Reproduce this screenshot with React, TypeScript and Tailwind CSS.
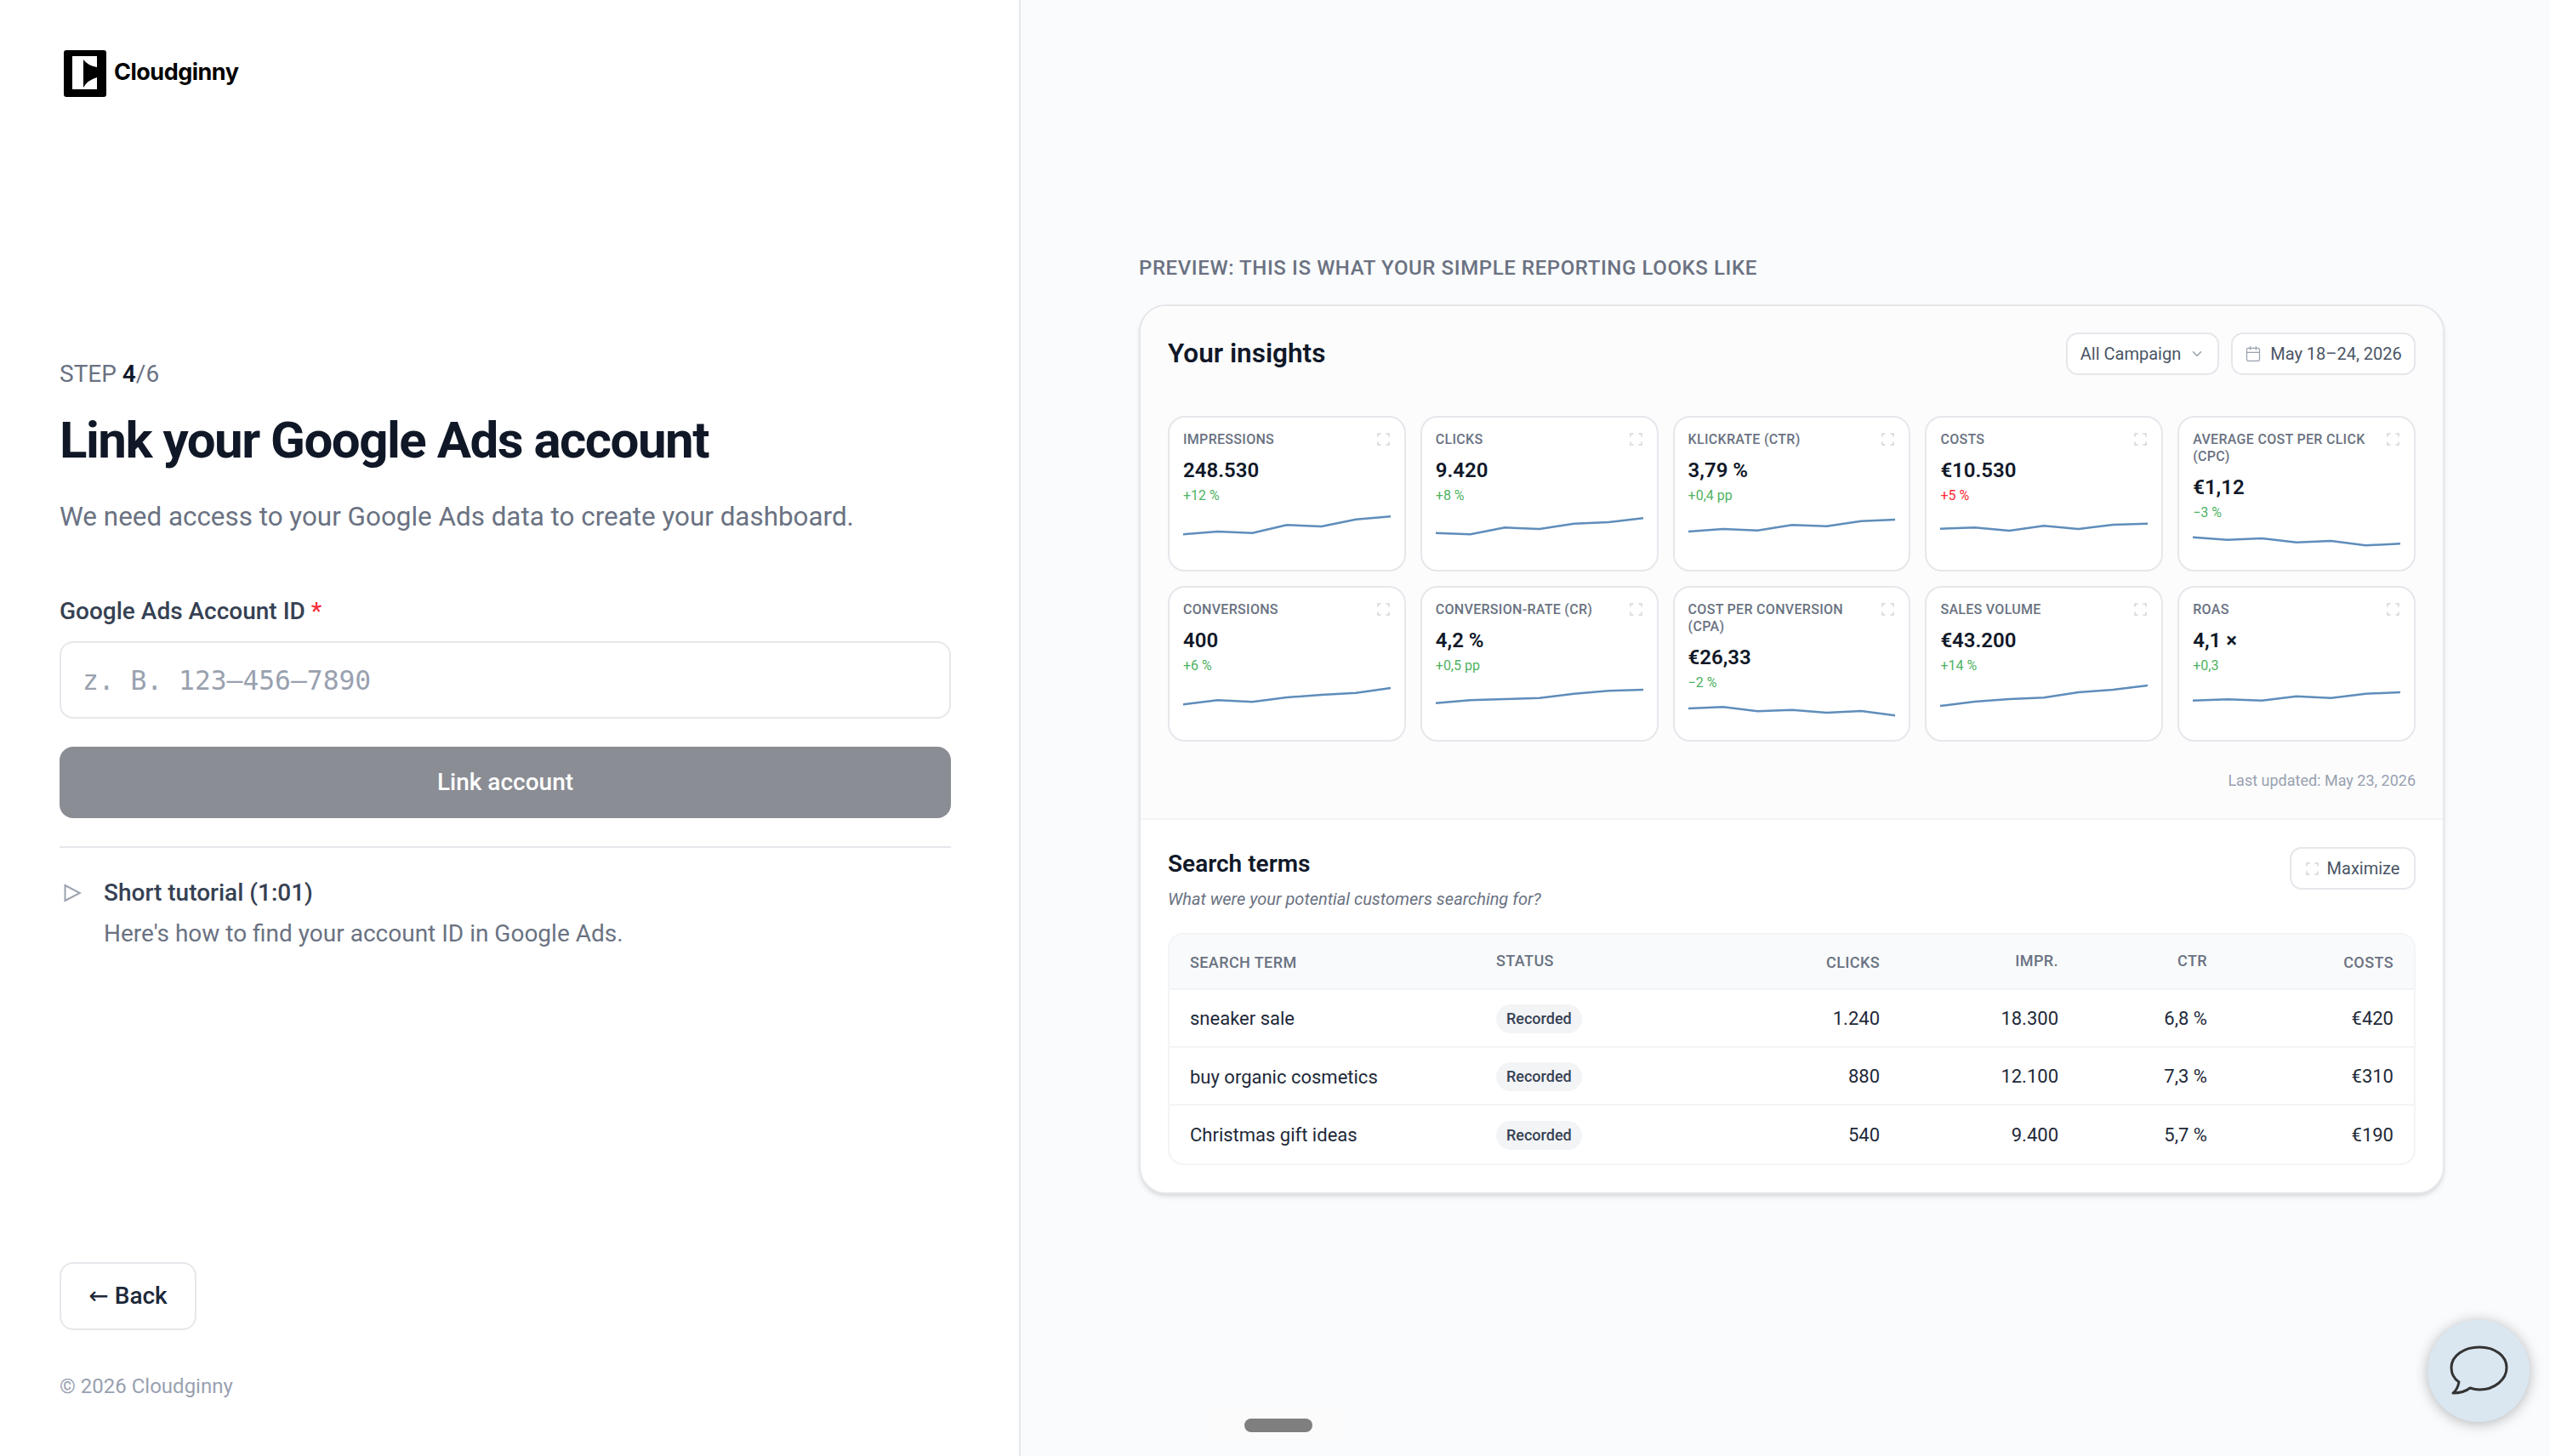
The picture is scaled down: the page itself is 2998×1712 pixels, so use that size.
import { Calendar, ChevronDown } from 'lucide-react';

const metrics = [
  { label: 'Impressions', value: '248.530', delta: '+12 %', pts: [30.3, 27, 28.7, 19.3, 21, 12.7, 9.3] },
  { label: 'Clicks', value: '9.420', delta: '+8 %', pts: [28.7, 30.3, 22.3, 24, 17.7, 16, 11.3] },
  { label: 'Klickrate (CTR)', value: '3,79 %', delta: '+0,4 pp', pts: [27, 24, 25.7, 19.3, 20.7, 14.7, 13] },
  { label: 'Costs', value: '€10.530', delta: '+5 %', bad: true, pts: [23.7, 22.3, 26, 20.3, 24, 19, 17.7] },
  { label: 'Average cost per click (CPC)', value: '€1,12', delta: '−3 %', pts: [13.7, 16.7, 15, 19.7, 18, 23.3, 21.3] },
  { label: 'Conversions', value: '400', delta: '+6 %', pts: [30.3, 25.3, 27.3, 22, 19, 16.7, 11] },
  { label: 'Conversion-rate (CR)', value: '4,2 %', delta: '+0,5 pp', pts: [28.7, 25.3, 24, 22.7, 17.7, 14.3, 13] },
  { label: 'Cost per conversion (CPA)', value: '€26,33', delta: '−2 %', pts: [15, 13.3, 18.3, 16.7, 20, 18, 23.3] },
  { label: 'Sales volume', value: '€43.200', delta: '+14 %', pts: [32, 27, 24, 22.3, 16, 13, 8] },
  { label: 'ROAS', value: '4,1 ×', delta: '+0,3', pts: [25.7, 24.3, 25.7, 20.7, 22.7, 17.7, 16] },
];

const rows = [
  ['sneaker sale', '1.240', '18.300', '6,8 %', '€420'],
  ['buy organic cosmetics', '880', '12.100', '7,3 %', '€310'],
  ['Christmas gift ideas', '540', '9.400', '5,7 %', '€190'],
];

const tableCols = 'grid grid-cols-[360px_200px_251px_210px_175px_219px] items-center px-[24px]';

function ExpandIcon() {
  return (
    <svg width="15" height="15" viewBox="0 0 15 15" fill="none" stroke="#d1d5db" strokeWidth="1.5" className="shrink-0">
      <path d="M1 4.5V1h3.5M10.5 1H14v3.5M14 10.5V14h-3.5M4.5 14H1v-3.5" />
    </svg>
  );
}

function Logo() {
  return (
    <svg width="50" height="55" viewBox="0 0 50 55">
      <rect x="0" y="0" width="50" height="55" rx="3" fill="#000" />
      <rect x="10" y="7" width="29" height="39" fill="#fff" />
      <path d="M23 11Q28 18 39 20V32Q28 35 23 44Z" fill="#000" />
    </svg>
  );
}

function Sparkline({ pts }: { pts: number[] }) {
  const line = pts.map((y, i) => `${(i * 245) / 6},${y}`).join(' ');
  return (
    <svg viewBox="0 0 245 40" preserveAspectRatio="none" className="block h-[40px] w-full" fill="none">
      <polyline points={line} stroke="#5f8dbb" strokeWidth="2.5" strokeLinejoin="round" strokeLinecap="round" />
    </svg>
  );
}

function MetricCard({ m }: { m: (typeof metrics)[number] }) {
  return (
    <div className="h-[183px] rounded-[20px] border-2 border-gray-200 bg-white px-[16px] pt-[16px]">
      <div className="flex items-start justify-between gap-[10px]">
        <div className="text-[16px] leading-[20px] font-medium tracking-[0.3px] text-gray-500 uppercase">{m.label}</div>
        <div className="mr-[1px] mt-[2px]"><ExpandIcon /></div>
      </div>
      <div className="mt-[7px] text-[24px] leading-[38px] font-semibold text-gray-900">{m.value}</div>
      <div className={`text-[16px] leading-[22px] ${m.bad ? 'text-red-500' : 'text-[#4fb263]'}`}>{m.delta}</div>
      <div className="mt-[4px]"><Sparkline pts={m.pts} /></div>
    </div>
  );
}

export default function App() {
  return (
    <div className="relative flex h-[1712px] w-[2998px] overflow-hidden bg-white [font-family:Roboto,sans-serif]">
      {/* left: form */}
      <div className="flex h-full w-[1200px] shrink-0 flex-col border-r-2 border-gray-200 pl-[70px] pr-[80px]">
        <div className="mt-[59px] flex items-center gap-[9px] pl-[5px]">
          <Logo />
          <span className="mb-[3px] text-[27px] font-bold tracking-[-0.5px] text-black [font-family:Inter,sans-serif]">Cloudginny</span>
        </div>

        <div className="mt-[306px] text-[28px] leading-[40px] text-gray-500">
          STEP <span className="font-semibold text-gray-900">4</span>/6
        </div>
        <h1 className="mt-[22px] text-[60px] leading-[72px] font-bold tracking-[-1.5px] text-gray-900">Link your Google Ads account</h1>
        <p className="mt-[30px] text-[31.4px] leading-[48px] text-gray-500">We need access to your Google Ads data to create your dashboard.</p>

        <label className="mt-[67px] text-[28px] leading-[40px] font-medium text-gray-700">
          Google Ads Account ID <span className="text-red-500">*</span>
        </label>
        <input
          placeholder="z. B. 123–456–7890"
          className="mt-[15px] h-[91px] w-full rounded-[16px] border-2 border-gray-200 px-[25px] text-[31.3px] [font-family:'DejaVu_Sans_Mono',monospace] outline-none placeholder:text-gray-400"
        />
        <button className="mt-[33px] h-[84px] w-full rounded-[16px] bg-[#8a8d94] text-[28px] font-medium text-white">Link account</button>
        <div className="mt-[33px] h-[2px] w-full bg-gray-200" />

        <div className="mt-[33px] flex items-start gap-[26px] pl-[5px]">
          <svg width="21" height="22" viewBox="0 0 21 22" fill="none" stroke="#9ca3af" strokeWidth="2" className="mt-[9px] shrink-0">
            <path d="M1.5 2L19 11L1.5 20Z" />
          </svg>
          <div>
            <div className="text-[28px] leading-[40px] font-medium text-gray-700">Short tutorial (1:01)</div>
            <div className="mt-[8px] text-[28px] leading-[40px] text-gray-500">Here's how to find your account ID in Google Ads.</div>
          </div>
        </div>

        <button className="mt-[366px] h-[80px] w-[161px] rounded-[16px] border-2 border-gray-200 text-[28px] font-medium text-gray-800">
          <span className="[font-family:'DejaVu_Sans',sans-serif]">←</span> Back
        </button>
        <div className="mt-[49px] text-[24px] leading-[34px] text-gray-400">© 2026 Cloudginny</div>
      </div>

      {/* right: preview */}
      <div className="h-full flex-1 bg-[#fafbfc] pl-[139px] pt-[299px]">
        <div className="text-[24px] leading-[32px] font-medium tracking-[0.6px] text-gray-500 uppercase">Preview: this is what your simple reporting looks like</div>
        <div className="mt-[27px] w-[1535px] overflow-hidden rounded-[32px] border-2 border-gray-200 bg-white shadow-md">
          <div className="h-[602px] bg-[#fcfcfd] px-[32px] pt-[30px]">
            <div className="flex h-[52px] items-center justify-between">
              <div className="text-[31.5px] font-semibold text-gray-900">Your insights</div>
              <div className="flex gap-[14px]">
                <div className="flex h-[50px] w-[180px] items-center justify-center gap-[10px] rounded-[14px] border-2 border-gray-200 bg-white text-[20px] text-gray-600">
                  All Campaign
                  <ChevronDown size={18} className="text-gray-400" />
                </div>
                <div className="flex h-[50px] w-[217px] items-center justify-center gap-[10px] rounded-[14px] border-2 border-gray-200 bg-white text-[20px] text-gray-600">
                  <Calendar size={20} className="text-gray-400" strokeWidth={1.5} />
                  May 18–24, 2026
                </div>
              </div>
            </div>
            <div className="mt-[47px] grid grid-cols-5 gap-[17px]">
              {metrics.map((m) => (
                <MetricCard key={m.label} m={m} />
              ))}
            </div>
            <div className="mt-[32px] text-right text-[18px] leading-[28px] text-gray-400">Last updated: May 23, 2026</div>
          </div>

          <div className="border-t-2 border-gray-100 px-[32px] pt-[32px] pb-[32px]">
            <div className="flex items-start justify-between">
              <div>
                <div className="text-[28px] leading-[40px] font-semibold text-gray-900">Search terms</div>
                <div className="mt-[6px] text-[20px] leading-[30px] text-gray-500 italic">What were your potential customers searching for?</div>
              </div>
              <div className="flex h-[50px] w-[148px] items-center justify-center gap-[10px] rounded-[14px] border-2 border-gray-200 text-[20px] text-gray-600">
                <ExpandIcon />
                Maximize
              </div>
            </div>

            <div className="mt-[25px] overflow-hidden rounded-[18px] border-2 border-gray-100">
              <div className={`${tableCols} h-[65px] border-b-2 border-gray-100 bg-gray-50 text-[18px] font-medium tracking-[0.4px] text-gray-500 uppercase`}>
                <div className="pt-[2px]">Search term</div>
                <div className="pb-[2px]">Status</div>
                <div className="pt-[2px] text-right">Clicks</div>
                <div className="pb-[2px] text-right">Impr.</div>
                <div className="pb-[2px] text-right">CTR</div>
                <div className="pt-[2px] text-right">Costs</div>
              </div>
              {rows.map((r, i) => (
                <div key={r[0]} className={`${tableCols} h-[68px] text-[22px] text-gray-800 ${i < 2 ? 'border-b-2 border-gray-100' : ''}`}>
                  <div className={i === 1 ? 'pt-[3px]' : ''}>{r[0]}</div>
                  <div>
                    <span className="inline-block h-[34px] rounded-full bg-gray-100 px-[12px] text-[18px] leading-[34px] font-medium text-gray-700">Recorded</span>
                  </div>
                  <div className="text-right">{r[1]}</div>
                  <div className="text-right">{r[2]}</div>
                  <div className="text-right">{r[3]}</div>
                  <div className="text-right">{r[4]}</div>
                </div>
              ))}
            </div>
          </div>
        </div>
      </div>

      {/* scroll handle */}
      <div className="absolute left-[1423px] top-[1655px] flex h-[41px] w-[160px] items-center justify-center bg-white/20">
        <div className="h-[16px] w-[80px] rounded-full bg-[#7f7f7f]" />
      </div>

      {/* chat bubble */}
      <button className="absolute left-[2854px] top-[1552px] flex h-[120px] w-[120px] items-center justify-center rounded-full bg-[#dae6f0] shadow-[0_2px_16px_rgba(0,0,0,0.28)]">
        <svg width="70" height="60" viewBox="0 0 70 60" fill="none" stroke="#333" strokeWidth="3" strokeLinejoin="round">
          <path d="M36 2C54 2 68 12 68 26C68 40 54 52 36 52C31 52 28 51 25 50C20 54 13 56 5 56C9 53 11 48 12 43C6 39 3 33 3 26C3 12 18 2 36 2Z" />
        </svg>
      </button>
    </div>
  );
}
